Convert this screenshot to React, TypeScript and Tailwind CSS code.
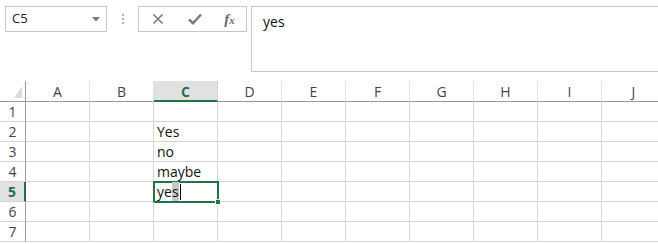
const columns = ["A", "B", "C", "D", "E", "F", "G", "H", "I", "J"];
const rows = [1, 2, 3, 4, 5, 6, 7];

const values: Record<string, string> = {
  C2: "Yes",
  C3: "no",
  C4: "maybe",
};

function Toolbar() {
  return (
    <div className="flex h-[81px] items-start pt-[6px] pl-[5px]">
      {/* Name box */}
      <div className="flex h-[26px] w-[102px] items-center justify-between border border-[#c6c6c6] bg-white pl-[6px] pr-[6px]">
        <span className="text-[13px] text-[#222]">C5</span>
        <svg width="8" height="5" viewBox="0 0 8 5">
          <path d="M0 0 L8 0 L4 4.5 Z" fill="#7a7a7a" />
        </svg>
      </div>

      {/* splitter dots */}
      <div className="flex h-[26px] w-[31px] flex-col items-center justify-center gap-[2px]">
        <span className="h-[2px] w-[2px] bg-[#b4b4b4]" />
        <span className="h-[2px] w-[2px] bg-[#b4b4b4]" />
        <span className="h-[2px] w-[2px] bg-[#b4b4b4]" />
      </div>

      {/* cancel / enter / fx */}
      <div className="flex h-[26px] w-[109px] items-center border border-[#c6c6c6] bg-white">
        <div className="flex w-[38px] justify-center">
          <svg width="12" height="12" viewBox="0 0 12 12">
            <path d="M1.5 1.5 L10.5 10.5 M10.5 1.5 L1.5 10.5" stroke="#7a7a7a" strokeWidth="1.6" />
          </svg>
        </div>
        <div className="flex w-[36px] justify-center">
          <svg width="14" height="12" viewBox="0 0 14 12">
            <path d="M1 6.5 L5 10.2 L13 1.5" stroke="#7a7a7a" strokeWidth="2.4" fill="none" />
          </svg>
        </div>
        <div className="flex w-[33px] justify-center">
          <span className="font-['Liberation_Serif',serif] text-[15px] font-bold italic text-[#6a6a6a]">
            f<span className="text-[11px]">x</span>
          </span>
        </div>
      </div>

      {/* formula bar */}
      <div className="ml-[4px] h-[66px] flex-1 border border-r-0 border-[#c6c6c6] bg-white pl-[11px] pt-[2px]">
        <span className="text-[14px] leading-[20px] text-[#111]">yes</span>
      </div>
    </div>
  );
}

function HeaderRow() {
  return (
    <div className="flex h-[21px]">
      <div className="relative w-[26px] shrink-0 border-r border-b border-[#9b9b9b] bg-white">
        <svg className="absolute bottom-[3px] right-[3px]" width="8" height="12" viewBox="0 0 8 12">
          <path d="M8 0 L8 12 L0 12 Z" fill="#dcdcdc" />
        </svg>
      </div>
      {columns.map((col) =>
        col === "C" ? (
          <div
            key={col}
            className="flex w-[64px] shrink-0 items-center justify-center border-r border-b-2 border-r-[#d4d4d4] border-b-[#217346] bg-[#e1e1e1] pt-[1px] text-[14px] font-bold text-[#217346]"
          >
            {col}
          </div>
        ) : (
          <div
            key={col}
            className="flex w-[64px] shrink-0 items-center justify-center border-r border-b border-r-[#e1e1e1] border-b-[#9b9b9b] bg-white text-[14px] text-[#444]"
          >
            {col}
          </div>
        )
      )}
    </div>
  );
}

function GridRow({ n }: { n: number }) {
  const active = n === 5;
  return (
    <div className="flex h-[20px]">
      <div
        className={`flex w-[26px] shrink-0 items-center justify-center border-b text-[14px] ${
          active
            ? "border-r-2 border-r-[#217346] border-b-[#d4d4d4] bg-[#e1e1e1] font-bold text-[#217346]"
            : "border-r border-r-[#9b9b9b] border-b-[#d4d4d4] bg-white text-[#444]"
        }`}
      >
        {n}
      </div>
      {columns.map((col) => {
        const id = `${col}${n}`;
        const isActive = id === "C5";
        return (
          <div
            key={id}
            className="relative flex w-[64px] shrink-0 items-end border-r border-b border-[#d4d4d4] pl-[3px] text-[14px] leading-[18px] text-[#111]"
          >
            {values[id]}
            {isActive && (
              <>
                <span className="relative z-10">
                  ye<span className="bg-[#c8c8c8]">s</span>
                  <span className="ml-[1px] inline-block h-[16px] w-px align-[-3px] bg-black" />
                </span>
                <div className="pointer-events-none absolute -top-[1px] -left-[1px] h-[22px] w-[66px] border-2 border-[#217346]" />
                <div className="absolute -right-[4px] -bottom-[4px] z-20 h-[6px] w-[6px] border border-white bg-[#217346]" />
              </>
            )}
          </div>
        );
      })}
    </div>
  );
}

export default function App() {
  return (
    <div className="h-[244px] w-[658px] overflow-hidden bg-white font-['Open_Sans','Liberation_Sans',sans-serif]">
      <Toolbar />
      <HeaderRow />
      {rows.map((n) => (
        <GridRow key={n} n={n} />
      ))}
    </div>
  );
}
